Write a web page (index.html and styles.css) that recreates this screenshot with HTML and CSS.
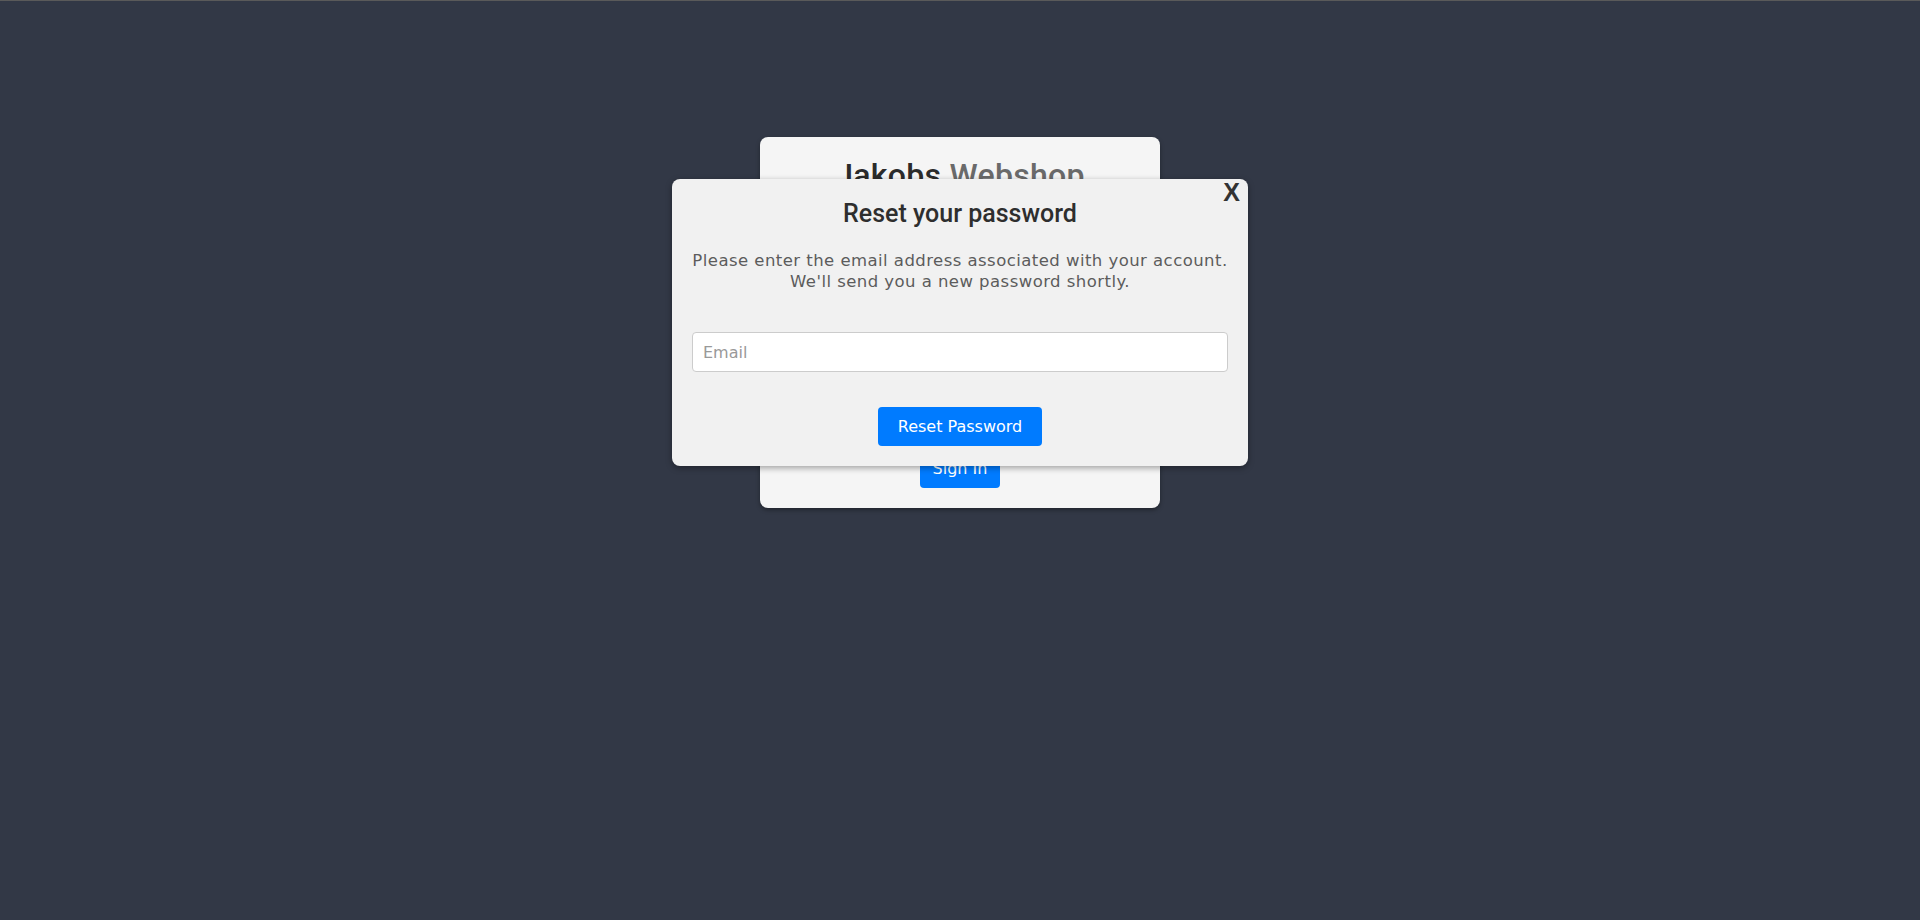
FILE: index.html
```html
<!DOCTYPE html>
<html lang="en">
<head>
<meta charset="utf-8">
<title>Jakobs Webshop</title>
<link rel="stylesheet" href="styles.css">
</head>
<body>
<div class="page">
  <div class="login-card">
    <h1 class="brand"><span class="brand-a">Jakobs</span> <span class="brand-b">Webshop</span></h1>
    <form class="login-form">
      <label class="field-label">Username</label>
      <input class="field" type="text" placeholder="Username">
      <label class="field-label">Password</label>
      <input class="field" type="password" placeholder="Password">
      <button class="btn btn-signin" type="button">Sign In</button>
    </form>
  </div>

  <div class="modal">
    <span class="modal-close">X</span>
    <h2 class="modal-title">Reset your password</h2>
    <p class="modal-text">Please enter the email address associated with your account.<br>We'll send you a new password shortly.</p>
    <input class="modal-input" type="email" placeholder="Email">
    <div class="modal-actions">
      <button class="btn btn-reset" type="button">Reset Password</button>
    </div>
  </div>
</div>
</body>
</html>
```
FILE: styles.css
```css
html, body {
  margin: 0;
  padding: 0;
  height: 100%;
}
body {
  background: #323846;
  border-top: 1px solid #5a5a5a;
  box-sizing: border-box;
  font-family: "DejaVu Sans", "Open Sans", sans-serif;
  overflow: hidden;
}
.page {
  position: relative;
  height: 100%;
  display: flex;
  justify-content: center;
  align-items: flex-start;
}
.login-card {
  margin-top: 136px;
  width: 400px;
  height: 371px;
  box-sizing: border-box;
  padding: 18px 20px 20px;
  background: #f5f5f5;
  border-radius: 8px;
  box-shadow: 0 2px 4px rgba(0,0,0,0.35);
  display: flex;
  flex-direction: column;
  align-items: center;
}
.brand {
  margin: 0;
  font-family: Roboto, "Liberation Sans", sans-serif;
  font-weight: 500;
  font-size: 32px;
  line-height: 40px;
  letter-spacing: 0.3px;
}
.brand-a { color: #2b2b2b; }
.brand-b { color: #6a6a6a; }
.login-form {
  width: 100%;
  flex: 1;
  display: flex;
  flex-direction: column;
  align-items: center;
}
.field-label {
  align-self: flex-start;
  margin-top: 20px;
  font-size: 15px;
  line-height: 22px;
  color: #555;
}
.field {
  width: 100%;
  box-sizing: border-box;
  height: 40px;
  margin-top: 4px;
  border: 1px solid #ccc;
  border-radius: 4px;
}
.btn {
  border: none;
  border-radius: 4px;
  background: #007bff;
  color: #fff;
  font-family: "DejaVu Sans", "Open Sans", sans-serif;
  cursor: pointer;
}
.btn-signin {
  margin-top: auto;
  width: 80px;
  height: 39px;
  font-size: 16px;
}
.modal {
  position: absolute;
  top: 178px;
  left: 672px;
  width: 576px;
  box-sizing: border-box;
  padding: 20px 20px 20px;
  background: #f1f1f1;
  border-radius: 8px;
  box-shadow: 0 2px 6px rgba(0,0,0,0.35);
  text-align: center;
}
.modal-close {
  position: absolute;
  top: -1px;
  right: 8px;
  font-family: "Liberation Sans", Arial, sans-serif;
  font-weight: bold;
  font-size: 25px;
  line-height: 28px;
  color: #333;
  cursor: pointer;
}
.modal-title {
  margin: 0;
  font-family: Roboto, "Liberation Sans", sans-serif;
  font-weight: 500;
  font-size: 25px;
  line-height: 30px;
  color: #2e2e2e;
}
.modal-text {
  margin: 21px 0 0;
  font-size: 16.5px;
  line-height: 21px;
  letter-spacing: 0.45px;
  color: #5c5c5c;
}
.modal-input {
  display: block;
  width: 100%;
  box-sizing: border-box;
  height: 40px;
  margin-top: 40px;
  padding: 0 10px;
  border: 1px solid #ccc;
  border-radius: 4px;
  background: #fff;
  font-family: "DejaVu Sans", "Open Sans", sans-serif;
  font-size: 16px;
}
.modal-input::placeholder {
  color: #999;
}
.modal-actions {
  margin-top: 35px;
  display: flex;
  justify-content: center;
}
.btn-reset {
  height: 39px;
  padding: 0 20px;
  font-size: 16px;
}
```
